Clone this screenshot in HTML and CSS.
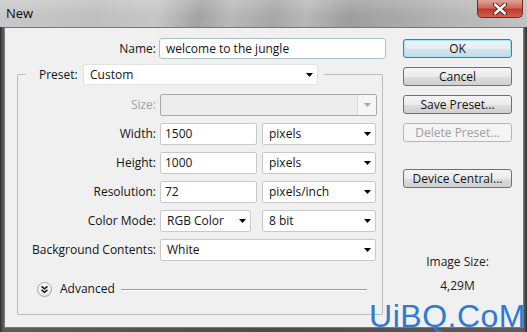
FILE: index.html
```html
<!DOCTYPE html>
<html lang="en">
<head>
<meta charset="utf-8">
<title>New</title>
<link rel="stylesheet" href="styles.css">
</head>
<body>
<div class="window">
  <div class="titlebar">
    <span class="title">New</span>
    <div class="close">
      <svg width="16" height="12" viewBox="0 0 16 12"><path d="M3 1.5 L13 10.5 M13 1.5 L3 10.5" stroke="#4a1c18" stroke-width="4.2" stroke-linecap="round"/><path d="M3 1.5 L13 10.5 M13 1.5 L3 10.5" stroke="#ffffff" stroke-width="2.4" stroke-linecap="round"/></svg>
    </div>
  </div>
  <div class="frame">
    <div class="client">
      <div class="form">
        <div class="name-row">
          <span class="lbl">Name:</span>
          <div class="field name-field">welcome to the jungle</div>
        </div>
        <fieldset class="group">
          <legend class="preset">
            <span class="preset-lbl">Preset:</span>
            <div class="field select preset-select"><span>Custom</span><svg class="arrow" width="7" height="4" viewBox="0 0 7 4"><path d="M0 0H7L3.5 4Z" fill="#000"/></svg></div>
          </legend>
          <div class="grid">
            <span class="lbl dim">Size:</span>
            <div class="field select off size-select"><span></span><span class="drop"><svg width="7" height="4" viewBox="0 0 7 4"><path d="M0 0H7L3.5 4Z" fill="#a8a8a8"/></svg></span></div>

            <span class="lbl">Width:</span>
            <div class="pair">
              <div class="field num">1500</div>
              <div class="field select unit"><span>pixels</span><svg class="arrow" width="7" height="4" viewBox="0 0 7 4"><path d="M0 0H7L3.5 4Z" fill="#000"/></svg></div>
            </div>

            <span class="lbl">Height:</span>
            <div class="pair">
              <div class="field num">1000</div>
              <div class="field select unit"><span>pixels</span><svg class="arrow" width="7" height="4" viewBox="0 0 7 4"><path d="M0 0H7L3.5 4Z" fill="#000"/></svg></div>
            </div>

            <span class="lbl">Resolution:</span>
            <div class="pair">
              <div class="field num">72</div>
              <div class="field select unit"><span>pixels/inch</span><svg class="arrow" width="7" height="4" viewBox="0 0 7 4"><path d="M0 0H7L3.5 4Z" fill="#000"/></svg></div>
            </div>

            <span class="lbl">Color Mode:</span>
            <div class="pair">
              <div class="field select mode"><span>RGB Color</span><svg class="arrow" width="7" height="4" viewBox="0 0 7 4"><path d="M0 0H7L3.5 4Z" fill="#000"/></svg></div>
              <div class="field select unit"><span>8 bit</span><svg class="arrow" width="7" height="4" viewBox="0 0 7 4"><path d="M0 0H7L3.5 4Z" fill="#000"/></svg></div>
            </div>

            <span class="lbl">Background Contents:</span>
            <div class="field select bg-select"><span>White</span><svg class="arrow" width="7" height="4" viewBox="0 0 7 4"><path d="M0 0H7L3.5 4Z" fill="#000"/></svg></div>
          </div>
          <div class="advanced">
            <svg width="15" height="15" viewBox="0 0 15 15">
              <defs><linearGradient id="adv" x1="0" y1="0" x2="0" y2="1"><stop offset="0" stop-color="#ffffff"/><stop offset="1" stop-color="#e2e2e2"/></linearGradient></defs>
              <circle cx="7.5" cy="7.5" r="7" fill="url(#adv)" stroke="#a4a4a4"/>
              <path d="M4.6 4.4 L7.5 6.9 L10.4 4.4 M4.6 7.9 L7.5 10.4 L10.4 7.9" fill="none" stroke="#111" stroke-width="1.4"/>
            </svg>
            <span class="adv-text">Advanced</span>
            <span class="adv-line"></span>
          </div>
        </fieldset>
      </div>
      <div class="side">
        <div class="btn default">OK</div>
        <div class="btn">Cancel</div>
        <div class="btn">Save Preset...</div>
        <div class="btn off">Delete Preset...</div>
        <div class="btn device">Device Central...</div>
        <div class="info">
          <span>Image Size:</span>
          <span>4,29M</span>
        </div>
      </div>
    </div>
  </div>
  <div class="watermark">UiBQ.CoM</div>
</div>
</body>
</html>
```
FILE: styles.css
```css
* { box-sizing: border-box; }

body {
  margin: 0;
  font-family: "Open Sans", "Noto Sans", sans-serif;
  font-size: 12px;
  color: #141414;
  background: #3e3e3e;
}

.window {
  position: relative;
  width: 527px;
  height: 332px;
  display: flex;
  flex-direction: column;
  overflow: hidden;
}

.titlebar {
  height: 27px;
  flex: none;
  display: flex;
  align-items: flex-start;
  padding-left: 6px;
  background:
    linear-gradient(to bottom, rgba(255,255,255,0.18), rgba(255,255,255,0) 60%),
    linear-gradient(100deg, #c9c9c9 0%, #bfbfbf 18%, #c6c6c6 30%, #a2a2a2 38%, #b9b9b9 44%, #a6a6a6 52%, #b8b8b8 58%, #9e9e9e 66%, #a9a9a9 76%, #b6b6b6 86%, #c2c2c2 100%);
}

.title {
  font-size: 13px;
  line-height: 16px;
  margin-top: 5px;
  color: #0c0c0c;
}

.close {
  margin-left: auto;
  margin-right: 4px;
  width: 46px;
  height: 18px;
  display: flex;
  align-items: center;
  justify-content: center;
  border: 1px solid #6d2a24;
  border-top: none;
  border-radius: 0 0 5px 5px;
  background: linear-gradient(to bottom, #e0a49b 0%, #cf6a5c 45%, #c0392b 55%, #d2604f 100%);
}

.frame {
  flex: 1;
  display: flex;
  padding: 0 3px 4px 4px;
  background: linear-gradient(to right, #2e2e2e 0, #5c5c5c 3px, #4a4a4a 50%, #5c5c5c calc(100% - 3px), #2e2e2e 100%);
}

.client {
  flex: 1;
  display: flex;
  gap: 16px;
  padding: 10px 0 0 12px;
  background: #f0f0f0;
  border: 1px solid #787878;
}

.form {
  width: 370px;
  flex: none;
}

.lbl {
  text-align: right;
  white-space: nowrap;
  align-self: center;
  line-height: 16px;
}

.lbl.dim { color: #a3a3a3; }

.name-row {
  display: grid;
  grid-template-columns: 139px 227px;
  column-gap: 3px;
  height: 21px;
}

.field {
  background: #ffffff;
  border: 1px solid #c9c9c9;
  border-radius: 2px;
  height: 22px;
  line-height: 20px;
  padding-left: 4px;
  white-space: nowrap;
}

.name-field {
  height: 21px;
  line-height: 19px;
  padding-left: 6px;
  border-color: #a9c0c7;
  border-radius: 3px;
}

.select {
  display: flex;
  align-items: center;
  justify-content: space-between;
  padding: 0 4px 0 6px;
}

.group {
  width: 366px;
  margin: 5px 0 0;
  padding: 0 0 17px;
  border: 1px solid #bcbcbc;
  border-radius: 2px;
  min-width: 0;
}

.preset {
  display: flex;
  align-items: center;
  margin-left: 8px;
  padding: 0 6px 0 13px;
}

.preset-lbl {
  width: 44px;
  line-height: 16px;
}

.preset-select {
  width: 235px;
  height: 21px;
  border-color: #e2e2e2;
}

.grid {
  display: grid;
  grid-template-columns: 138px 217px;
  grid-auto-rows: 22px;
  column-gap: 4px;
  row-gap: 7px;
  margin-top: 9px;
}

.size-select {
  padding: 0;
  background: #ececec;
  border-color: #a9a9a9;
  overflow: hidden;
}

.size-select .drop {
  width: 19px;
  height: 100%;
  display: flex;
  align-items: center;
  justify-content: center;
  background: #f5f5f5;
  border-left: 1px solid #dcdcdc;
}

.pair {
  display: flex;
  justify-content: space-between;
  width: 216px;
}

.num { width: 97px; }
.unit { width: 114px; }
.mode { width: 91px; }
.bg-select { width: 216px; }

.advanced {
  display: flex;
  align-items: center;
  height: 16px;
  margin-top: 20px;
  padding-left: 19px;
  padding-right: 15px;
}

.adv-text {
  margin-left: 8px;
  line-height: 16px;
}

.adv-line {
  flex: 1;
  height: 1px;
  margin-left: 6px;
  background: #9c9c9c;
  box-shadow: 0 1px 0 #ffffff;
}

.side {
  width: 109px;
  flex: none;
  display: flex;
  flex-direction: column;
  gap: 9px;
  padding-top: 1px;
}

.btn {
  height: 19px;
  line-height: 17px;
  text-align: center;
  border: 1px solid #707070;
  border-radius: 3px;
  background: linear-gradient(to bottom, #f4f4f4 0%, #ebebeb 50%, #dddddd 51%, #d0d0d0 100%);
  color: #141414;
}

.btn.default {
  border-color: #3c7fb1;
  box-shadow: inset 0 0 0 1px #a9e2f7;
  background: linear-gradient(to bottom, #eef6fa 0%, #e4eef3 50%, #d5e3ea 51%, #c8dbe4 100%);
}

.btn.off {
  border-color: #b4b8bb;
  background: #f4f4f4;
  color: #a0a0a0;
}

.btn.device { margin-top: 18px; }

.info {
  margin-top: 57px;
  display: flex;
  flex-direction: column;
  align-items: center;
  gap: 8px;
  line-height: 16px;
  color: #1c1c1c;
}

.watermark {
  position: absolute;
  top: 302px;
  right: 1px;
  font-family: "Liberation Sans", Arial, sans-serif;
  font-size: 32px;
  line-height: 28px;
  letter-spacing: 0.5px;
  color: #2f7ad3;
}
```
